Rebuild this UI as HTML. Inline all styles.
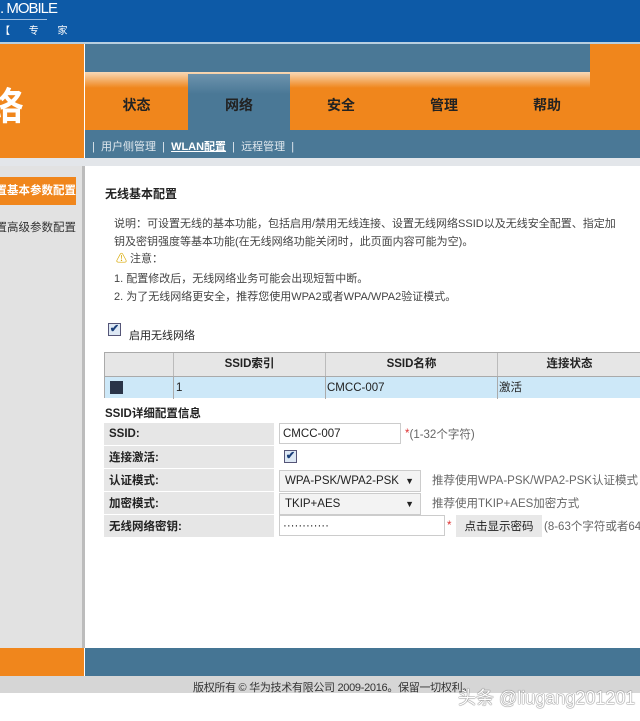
<!DOCTYPE html>
<html><head><meta charset="utf-8"><style>
*{margin:0;padding:0;box-sizing:border-box}
body{width:640px;height:721px;overflow:hidden;background:#fff;font-family:"Liberation Sans","Noto Sans CJK SC",sans-serif;position:relative;color:#222}
.a{position:absolute}
.tab{position:absolute;top:86px;height:44px;line-height:38px;text-align:center;font-size:14px;font-weight:bold;color:#222}
.t{font-size:11px;color:#444;position:absolute;white-space:nowrap}
.row{position:absolute;left:104px;width:536px;height:22px;font-size:11.5px}
.row .l{position:absolute;left:0;width:170px;height:22px;background:#e6e6e6;display:flex;align-items:center;padding-left:5px;font-weight:bold;color:#222}
.row .v{position:absolute;left:173px;top:0;height:22px;display:flex;align-items:center;white-space:nowrap}
.sel{border:1px solid #ccc;background:#f3f3f3;height:19px;top:1px!important;padding-left:5px;font-size:11.5px}
</style></head><body>
<div class="a" style="left:0;top:0;width:640px;height:42px;background:#0d5aa7"></div>
<div class="a" style="left:0;top:0;font-size:15px;color:#fff;letter-spacing:-1px">. MOBILE</div>
<div class="a" style="left:0;top:19px;width:47px;height:1px;background:#9bbde0"></div>
<div class="a" style="left:0;top:22px;font-size:10px;color:#fff;letter-spacing:8px">【 专 家</div>
<div class="a" style="left:0;top:42px;width:640px;height:2px;background:#b8cfe0"></div>
<div class="a" style="left:0;top:44px;width:84px;height:124px;background:#f0861c"></div>
<div class="a" style="left:-14px;top:76px;font-size:38px;font-weight:bold;color:#fff">络</div>
<div class="a" style="left:85px;top:44px;width:505px;height:28px;background:#4a7896"></div>
<div class="a" style="left:590px;top:44px;width:50px;height:86px;background:#f0861c"></div>
<div class="a" style="left:85px;top:72px;width:505px;height:58px;background:linear-gradient(#f7d9b8 0,#f0861c 16px,#f0861c)"></div>
<div class="a" style="left:188px;top:74px;width:102px;height:56px;background:linear-gradient(#6d93ad,#4a7896 20px)"></div>
<div class="tab" style="left:85px;width:103px">状态</div>
<div class="tab" style="left:188px;width:102px">网络</div>
<div class="tab" style="left:290px;width:102px">安全</div>
<div class="tab" style="left:392px;width:104px">管理</div>
<div class="tab" style="left:496px;width:102px">帮助</div>
<div class="a" style="left:85px;top:130px;width:555px;height:28px;background:#4a7896"></div>
<div class="a" style="left:92px;top:138px;font-size:11px;color:#e0e8ee;white-space:nowrap">| &nbsp;用户侧管理 &nbsp;| &nbsp;<b style="color:#fff;text-decoration:underline">WLAN配置</b> &nbsp;| &nbsp;远程管理 &nbsp;|</div>
<div class="a" style="left:0;top:158px;width:640px;height:8px;background:#e3e6ea"></div>
<div class="a" style="left:0;top:166px;width:82px;height:482px;background:#e2e2e2"></div>
<div class="a" style="left:82px;top:166px;width:3px;height:482px;background:#bcbcbc"></div>
<div class="a" style="left:0;top:177px;width:76px;height:28px;background:#f0861c;color:#fff;font-size:11.5px;line-height:28px;font-weight:bold;white-space:nowrap;overflow:hidden;direction:rtl;text-align:left"><span style="direction:ltr;unicode-bidi:bidi-override">置基本参数配置</span></div>
<div class="a" style="left:0;top:219px;width:76px;font-size:11.5px;color:#333;white-space:nowrap;overflow:hidden;direction:rtl"><span style="direction:ltr;unicode-bidi:bidi-override">置高级参数配置</span></div>
<div class="a" style="left:105px;top:185px;font-size:12px;font-weight:bold">无线基本配置</div>
<div class="t" style="left:114px;top:215px">说明：可设置无线的基本功能，包括启用/禁用无线连接、设置无线网络SSID以及无线安全配置、指定加</div>
<div class="t" style="left:114px;top:233px">钥及密钥强度等基本功能(在无线网络功能关闭时，此页面内容可能为空)。</div>
<div class="t" style="left:116px;top:250px"><span style="color:#d8a800">⚠</span> 注意：</div>
<div class="t" style="left:114px;top:270px">1. 配置修改后，无线网络业务可能会出现短暂中断。</div>
<div class="t" style="left:114px;top:288px">2. 为了无线网络更安全，推荐您使用WPA2或者WPA/WPA2验证模式。</div>
<div class="a" style="left:108px;top:323px;width:13px;height:13px;border:1px solid #557;background:#dde8f4;font-size:11px;line-height:11px;text-align:center;color:#1a3f7a;font-weight:bold">✔</div>
<div class="t" style="left:129px;top:327px;color:#222">启用无线网络</div>
<div class="a" style="left:104px;top:352px;width:536px;height:46px;border:1px solid #aaa;font-size:11.5px">
 <div class="a" style="left:0;top:0;width:536px;height:23px;background:#e6e6e6;font-weight:bold;line-height:22px">
  <div class="a" style="left:68px;width:152px;height:23px;border-left:1px solid #bbb;text-align:center">SSID索引</div>
  <div class="a" style="left:220px;width:172px;height:23px;border-left:1px solid #bbb;text-align:center">SSID名称</div>
  <div class="a" style="left:392px;width:144px;height:23px;border-left:1px solid #bbb;text-align:center">连接状态</div>
 </div>
 <div class="a" style="left:0;top:23px;width:536px;height:22px;background:#cde8f8;line-height:22px;border-top:1px solid #aaa">
  <div class="a" style="left:5px;top:4px;width:13px;height:13px;background:#2a3448"></div>
  <div class="a" style="left:68px;width:152px;height:22px;border-left:1px solid #aaa;padding-left:2px">1</div>
  <div class="a" style="left:220px;width:172px;height:22px;border-left:1px solid #aaa;padding-left:1px">CMCC-007</div>
  <div class="a" style="left:392px;width:144px;height:22px;border-left:1px solid #aaa;padding-left:1px">激活</div>
 </div>
</div>
<div class="a" style="left:105px;top:405px;font-size:11.5px;font-weight:bold">SSID详细配置信息</div>
<div class="row" style="top:423px"><div class="l">SSID:</div><div class="v" style="left:175px;width:122px;height:21px;border:1px solid #ccc;padding-left:3px">CMCC-007</div><div class="v" style="left:301px;color:#666"><span style="color:#d33">*</span>(1-32个字符)</div></div>
<div class="row" style="top:446px"><div class="l">连接激活:</div><div class="a" style="left:180px;top:4px;width:13px;height:13px;border:1px solid #557;background:#dde8f4;font-size:11px;line-height:11px;text-align:center;color:#1a3f7a;font-weight:bold">✔</div></div>
<div class="row" style="top:469px"><div class="l">认证模式:</div><div class="v sel" style="left:175px;width:142px">WPA-PSK/WPA2-PSK<span style="position:absolute;right:6px;font-size:9px">▼</span></div><div class="v" style="left:328px;color:#666">推荐使用WPA-PSK/WPA2-PSK认证模式</div></div>
<div class="row" style="top:492px"><div class="l">加密模式:</div><div class="v sel" style="left:175px;width:142px">TKIP+AES<span style="position:absolute;right:6px;font-size:9px">▼</span></div><div class="v" style="left:328px;color:#666">推荐使用TKIP+AES加密方式</div></div>
<div class="row" style="top:515px;overflow:hidden"><div class="l">无线网络密钥:</div><div class="v" style="left:175px;width:166px;height:21px;border:1px solid #ccc;padding-left:3px">············</div><div class="v" style="left:343px;color:#d33">*</div><div class="v" style="left:352px;width:86px;background:#e8e8e8;justify-content:center;font-size:11.5px">点击显示密码</div><div class="v" style="left:440px;color:#666">(8-63个字符或者64</div></div>
<div class="a" style="left:0;top:648px;width:84px;height:28px;background:#f0861c"></div>
<div class="a" style="left:85px;top:648px;width:555px;height:28px;background:#457594"></div>
<div class="a" style="left:0;top:676px;width:640px;height:17px;background:#d6d6d6"></div>
<div class="a" style="left:193px;top:679px;font-size:11px;color:#333;white-space:nowrap;letter-spacing:-0.3px">版权所有 © 华为技术有限公司 2009-2016。保留一切权利。</div>
<div class="a" style="left:458px;top:684px;font-size:18px;color:#fff;white-space:nowrap;text-shadow:0 0 1px #555,0 0 1px #555">头条 @liugang201201</div>
</body></html>
